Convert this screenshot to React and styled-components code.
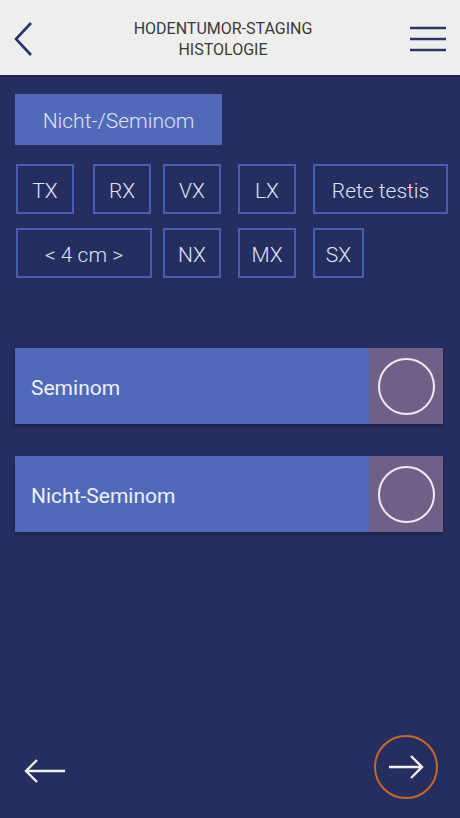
import React, { useState } from 'react';
import styled, { createGlobalStyle } from 'styled-components';

const GlobalStyle = createGlobalStyle`
  html, body {
    margin: 0;
    padding: 0;
    background: #252e5e;
  }
  * {
    box-sizing: border-box;
  }
`;

const Screen = styled.div`
  width: 460px;
  height: 818px;
  display: flex;
  flex-direction: column;
  background: #252e5e;
  font-family: Roboto, "Liberation Sans", sans-serif;
  overflow: hidden;
`;

const Header = styled.header`
  height: 77px;
  flex-shrink: 0;
  display: flex;
  align-items: center;
  justify-content: space-between;
  padding: 2px 14px 0 10px;
  background: #eeeeec;
  border-bottom: 2px solid #1c2450;
`;

const IconButton = styled.button`
  background: none;
  border: none;
  padding: 0;
  display: flex;
  align-items: center;
  justify-content: center;
  width: ${props => props.w}px;
  height: 40px;
  cursor: pointer;
`;

const Title = styled.h1`
  margin: 0;
  font-size: 16px;
  font-weight: 400;
  line-height: 21px;
  text-align: center;
  color: #3a3a3a;
`;

const Content = styled.main`
  flex: 1;
  display: flex;
  flex-direction: column;
  padding: 17px 15px 0;
`;

const CategoryButton = styled.button`
  align-self: flex-start;
  width: 207px;
  height: 51px;
  border: none;
  background: #5069b9;
  color: #dfe3f5;
  font-family: inherit;
  font-size: 21px;
  font-weight: 300;
  padding: 2px 0 0;
  cursor: pointer;
`;

const ChipGrid = styled.div`
  display: grid;
  grid-template-columns: 77px 70px 75px 75px 135px;
  row-gap: 14px;
  margin: 19px 0 0 1px;
`;

const Chip = styled.button`
  grid-column: ${props => props.span ? `span ${props.span}` : 'auto'};
  width: ${props => props.w}px;
  height: 50px;
  border: 2px solid #4a5db4;
  background: transparent;
  color: #dfe3f5;
  font-family: inherit;
  font-size: 21px;
  font-weight: 300;
  padding: 3px 0 0;
  cursor: pointer;
`;

const OptionList = styled.div`
  display: flex;
  flex-direction: column;
  gap: 32px;
  margin-top: 70px;
`;

const Option = styled.div`
  display: flex;
  height: 76px;
  width: 428px;
  background: #5069b9;
  box-shadow: 0 2px 3px rgba(10, 14, 40, 0.45);
  cursor: pointer;
`;

const OptionLabel = styled.span`
  flex: 1;
  display: flex;
  align-items: center;
  padding: 3px 0 0 16px;
  color: #eef0fa;
  font-size: 21px;
`;

const RadioCell = styled.div`
  width: 74px;
  display: flex;
  align-items: center;
  justify-content: center;
  background: #705f86;
`;

const Radio = styled.div`
  width: 57px;
  height: 57px;
  border-radius: 50%;
  border: 2px solid #f0e8f4;
  background: ${props => props.checked ? '#f0e8f4' : 'transparent'};
`;

const Footer = styled.footer`
  height: 112px;
  flex-shrink: 0;
  display: flex;
  align-items: flex-start;
  justify-content: space-between;
  padding: 29px 22px 0 24px;
`;

const BackArrow = styled.button`
  background: none;
  border: none;
  padding: 0;
  margin-top: 22px;
  cursor: pointer;
`;

const NextButton = styled.button`
  width: 64px;
  height: 64px;
  border-radius: 50%;
  border: 2px solid #c7682a;
  background: transparent;
  display: flex;
  align-items: center;
  justify-content: center;
  padding: 0;
  cursor: pointer;
`;

const row1 = [
  { label: 'TX', w: 58 },
  { label: 'RX', w: 58 },
  { label: 'VX', w: 58 },
  { label: 'LX', w: 58 },
  { label: 'Rete testis', w: 135 },
];

const row2 = [
  { label: '< 4 cm >', w: 136, span: 2 },
  { label: 'NX', w: 58 },
  { label: 'MX', w: 58 },
  { label: 'SX', w: 51 },
];

const options = ['Seminom', 'Nicht-Seminom'];

export default function App() {
  const [selected, setSelected] = useState(null);

  return (
    <>
      <GlobalStyle />
      <Screen>
        <Header>
          <IconButton w={26} aria-label="Zurück">
            <svg width="22" height="36" viewBox="0 0 22 36">
              <path d="M19 2 L4 18 L19 34" fill="none" stroke="#27336a" strokeWidth="2.6" />
            </svg>
          </IconButton>
          <Title>
            HODENTUMOR-STAGING
            <br />
            HISTOLOGIE
          </Title>
          <IconButton w={36} aria-label="Menü">
            <svg width="36" height="26" viewBox="0 0 36 26">
              <path d="M0 2 H36 M0 13 H36 M0 24 H36" stroke="#2c3566" strokeWidth="2.6" />
            </svg>
          </IconButton>
        </Header>

        <Content>
          <CategoryButton>Nicht-/Seminom</CategoryButton>

          <ChipGrid>
            {row1.concat(row2).map(chip => (
              <Chip key={chip.label} w={chip.w} span={chip.span}>
                {chip.label}
              </Chip>
            ))}
          </ChipGrid>

          <OptionList>
            {options.map(opt => (
              <Option key={opt} onClick={() => setSelected(opt)}>
                <OptionLabel>{opt}</OptionLabel>
                <RadioCell>
                  <Radio checked={selected === opt} />
                </RadioCell>
              </Option>
            ))}
          </OptionList>
        </Content>

        <Footer>
          <BackArrow aria-label="Zurück">
            <svg width="42" height="28" viewBox="0 0 42 28">
              <path d="M41 14 H3 M13 3 L2 14 L13 25" fill="none" stroke="#f2f2f6" strokeWidth="2.4" />
            </svg>
          </BackArrow>
          <NextButton aria-label="Weiter">
            <svg width="36" height="28" viewBox="0 0 36 28">
              <path d="M1 14 H33 M23 3 L34 14 L23 25" fill="none" stroke="#f2f2f6" strokeWidth="2.4" />
            </svg>
          </NextButton>
        </Footer>
      </Screen>
    </>
  );
}
